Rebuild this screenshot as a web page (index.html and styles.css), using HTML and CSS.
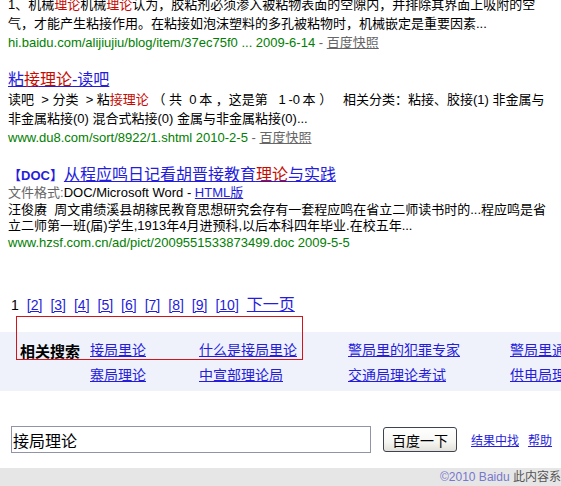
FILE: index.html
```html
<!DOCTYPE html>
<html lang="zh-CN">
<head>
<meta charset="utf-8">
<title>接局理论 - 百度搜索</title>
<link rel="stylesheet" href="styles.css">
</head>
<body>
<div class="results">
  <div class="result r1">
    <div class="line">1、机械<em>理论</em>机械<em>理论</em>认为，胶粘剂必须渗入被粘物表面的空隙内，并排除其界面上吸附的空</div>
    <div class="line">气，才能产生粘接作用。在粘接如泡沫塑料的多孔被粘物时，机械嵌定是重要因素...</div>
    <div class="line url">hi.baidu.com/alijiujiu/blog/item/37ec75f0 ... 2009-6-14 <span class="dash">-</span> <a class="cache" href="#">百度快照</a></div>
  </div>
  <div class="result r2">
    <div class="title"><a href="#">粘<em>接理论</em>-读吧</a></div>
    <div class="line">读吧&nbsp; &gt; 分类&nbsp; &gt; 粘<em>接理论</em> （ 共&nbsp; 0&thinsp;本 ，这是第&nbsp;&nbsp; 1&thinsp;-0&thinsp;本 ）&nbsp;&nbsp; 相关分类：粘接、胶接(1) 非金属与</div>
    <div class="line">非金属粘接(0) 混合式粘接(0) 金属与非金属粘接(0)...</div>
    <div class="line url">www.du8.com/sort/8922/1.shtml 2010-2-5 <span class="dash">-</span> <a class="cache" href="#">百度快照</a></div>
  </div>
  <div class="result r3">
    <div class="title"><span class="doc">【DOC】</span><a href="#">从程应鸣日记看胡晋接教育<em>理论</em>与实践</a></div>
    <div class="line"><span class="fmt">文件格式:</span>DOC/Microsoft Word - <a class="html" href="#">HTML版</a></div>
    <div class="line">汪俊赓&nbsp; 周文甫绩溪县胡稼民教育思想研究会存有一套程应鸣在省立二师读书时的...程应鸣是省</div>
    <div class="line">立二师第一班(届)学生,1913年4月进预科,以后本科四年毕业.在校五年...</div>
    <div class="line url">www.hzsf.com.cn/ad/pict/2009551533873499.doc 2009-5-5</div>
  </div>
  <div class="pager">
    <span class="cur">1</span>
    <a href="#">[2]</a>
    <a href="#">[3]</a>
    <a href="#">[4]</a>
    <a href="#">[5]</a>
    <a href="#">[6]</a>
    <a href="#">[7]</a>
    <a href="#">[8]</a>
    <a href="#">[9]</a>
    <a href="#">[10]</a>
    <a class="next" href="#">下一页</a>
  </div>
</div>
<div class="related">
  <div class="mark"></div>
  <div class="rs-grid">
    <div class="rs-label">相关搜索</div>
    <a href="#">接局里论</a>
    <a href="#">什么是接局里论</a>
    <a href="#">警局里的犯罪专家</a>
    <a href="#">警局里通缉犯</a>
    <div></div>
    <a href="#">寨局理论</a>
    <a href="#">中宣部理论局</a>
    <a href="#">交通局理论考试</a>
    <a href="#">供电局理论考试</a>
  </div>
</div>
<form class="search" onsubmit="return false">
  <input class="kw" type="text" value="接局理论">
  <button class="btn" type="button">百度一下</button>
  <a class="small first" href="#">结果中找</a>
  <a class="small" href="#">帮助</a>
</form>
<div class="footer">©2010 Baidu <span>此内容系百度根据您的指令自动搜索的结果，不代表百度赞成被搜索网站的内容或立场</span></div>
</body>
</html>
```
FILE: styles.css
```css
html, body {
  margin: 0;
  padding: 0;
  background: #fff;
  overflow: hidden;
}
body {
  font-family: "Liberation Sans", "Noto Sans CJK SC", sans-serif;
  font-size: 13px;
  color: #000;
}
a {
  color: #261cdc;
}
em {
  font-style: normal;
  color: #c60a00;
}
.results {
  padding: 0 8px;
}
.result {
  margin-bottom: 18px;
}
.r1 {
  margin-top: -5px;
}
.line {
  line-height: 19px;
  height: 19px;
  white-space: nowrap;
}
.r3 .line {
  line-height: 16.5px;
  height: 16.5px;
}
.title {
  font-size: 16px;
  line-height: 20px;
  height: 20px;
  white-space: nowrap;
}
.title a {
  color: #261cdc;
}
.doc {
  color: #261cdc;
  font-weight: bold;
  font-size: 13px;
  margin-right: 1px;
}
.url {
  color: #008000;
}
.dash {
  color: #666;
}
.cache {
  color: #666;
}
.fmt {
  color: #666;
}
.html {
  color: #261cdc;
}
.pager {
  display: flex;
  align-items: baseline;
  gap: 8px;
  margin: 43px 0 0 3px;
  font-size: 14px;
  line-height: 22px;
  height: 22px;
  white-space: nowrap;
}
.pager .next {
  font-size: 16px;
}
.related {
  position: relative;
  margin-top: 16px;
  background: #eff2fa;
  padding: 4px 0 5px 20px;
}
.mark {
  position: absolute;
  top: -16px;
  left: 16px;
  width: 287px;
  height: 44px;
  box-sizing: border-box;
  border: 1px solid #d0161b;
}
.rs-grid {
  display: grid;
  grid-template-columns: 70px 109px 149px 162px 200px;
  grid-auto-rows: 25px;
  align-items: center;
  font-size: 14px;
  white-space: nowrap;
}
.rs-label {
  font-weight: bold;
  font-size: 15px;
  padding-top: 3px;
}
.search {
  display: flex;
  align-items: center;
  margin: 35px 0 0 11px;
  height: 27px;
}
.kw {
  box-sizing: border-box;
  width: 360px;
  height: 27px;
  margin: 0;
  border: 1px solid #8f95a6;
  padding: 0 0 0 1px;
  font-family: "Liberation Sans", "Noto Sans CJK SC", sans-serif;
  font-size: 16px;
  color: #000;
  background: #fff;
  outline: none;
}
.btn {
  box-sizing: border-box;
  width: 74px;
  height: 25px;
  margin: 0 0 0 12px;
  padding: 0;
  border: 1px solid #3d4450;
  border-radius: 3px;
  background: linear-gradient(#ffffff, #f6f6f3 60%, #e2e0d8);
  font-family: "Liberation Sans", "Noto Sans CJK SC", sans-serif;
  font-size: 14px;
  color: #000;
}
.small {
  font-size: 12px;
  margin-left: 9px;
}
.small.first {
  margin-left: 14px;
}
.footer {
  margin-top: 15px;
  background: #e6e6e6;
  height: 30px;
  line-height: 18px;
  padding-left: 440px;
  font-size: 12px;
  color: #77c;
  white-space: nowrap;
  overflow: hidden;
}
.footer span {
  color: #555;
}
```
